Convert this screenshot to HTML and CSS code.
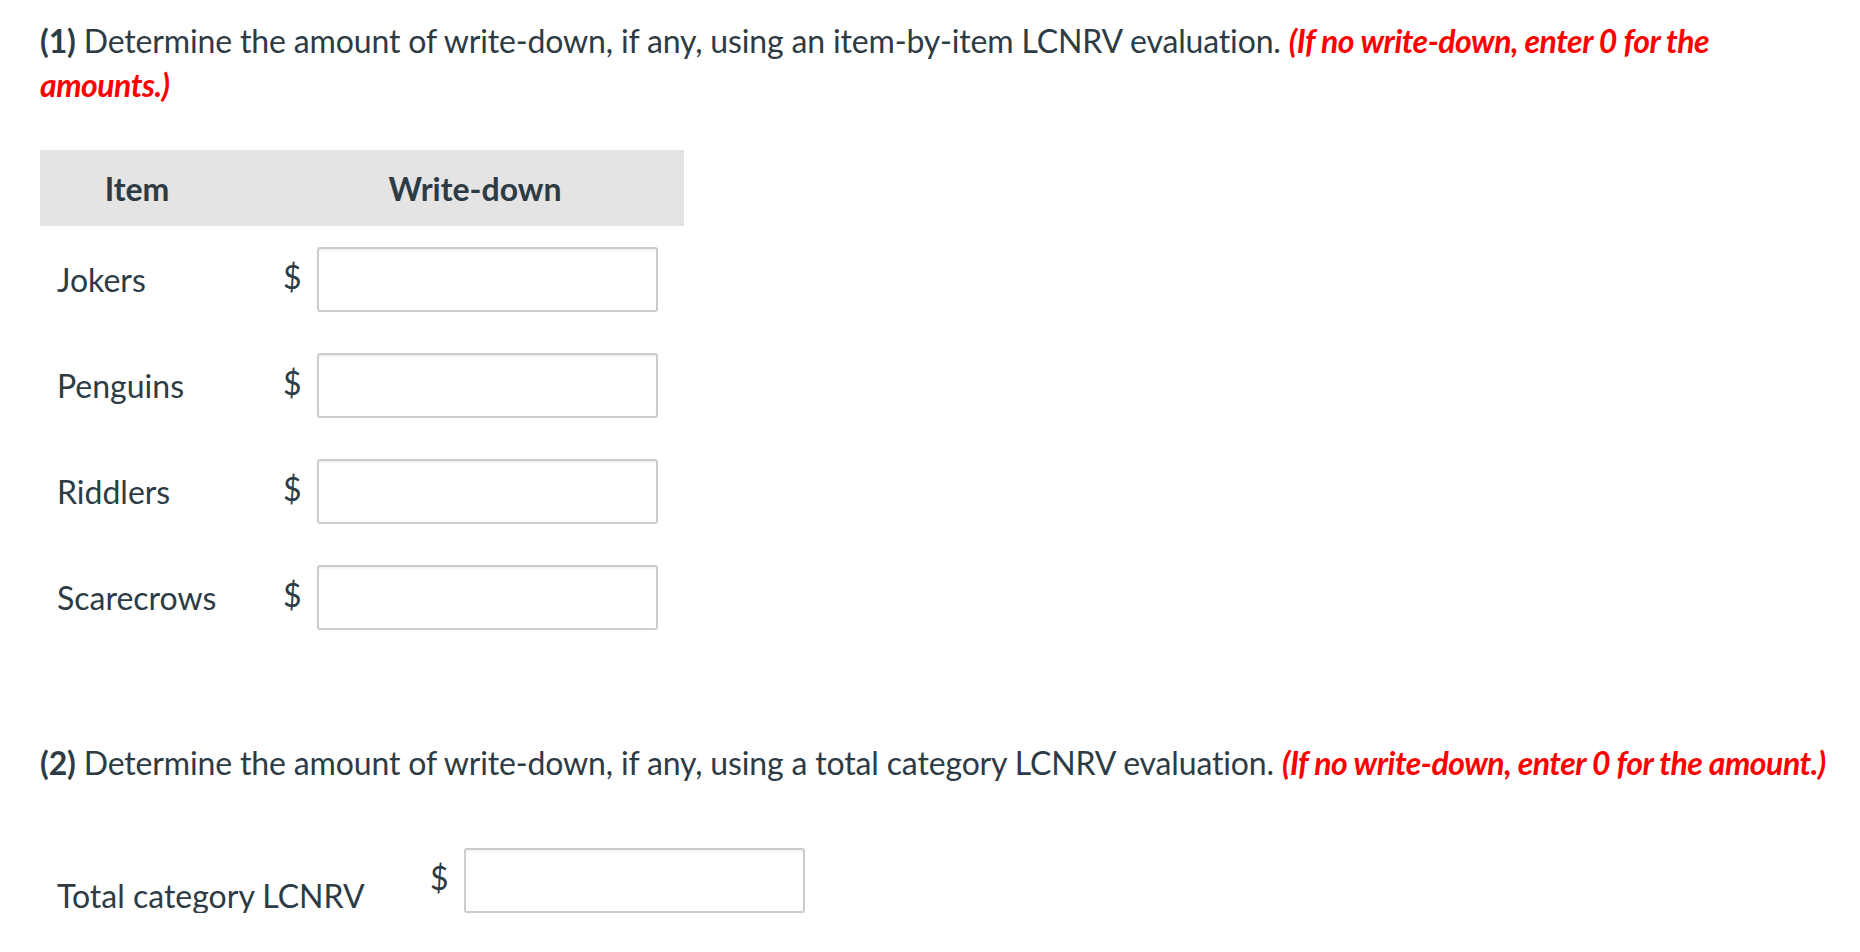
FILE: index.html
```html
<!DOCTYPE html>
<html>
<head>
<meta charset="utf-8">
<link rel="stylesheet" href="styles.css">
</head>
<body>
<div class="page">
  <p class="question"><strong>(1)</strong> Determine the amount of write-down, if any, using an item-by-item LCNRV evaluation. <em class="hint">(If no write-down, enter 0 for the amounts.)</em></p>

  <div class="table">
    <div class="thead">
      <div class="th th-item">Item</div>
      <div class="th th-wd">Write-down</div>
    </div>
    <div class="row">
      <div class="label">Jokers</div>
      <div class="cur">$</div>
      <div class="input"></div>
    </div>
    <div class="row">
      <div class="label">Penguins</div>
      <div class="cur">$</div>
      <div class="input"></div>
    </div>
    <div class="row">
      <div class="label">Riddlers</div>
      <div class="cur">$</div>
      <div class="input"></div>
    </div>
    <div class="row">
      <div class="label">Scarecrows</div>
      <div class="cur">$</div>
      <div class="input"></div>
    </div>
  </div>

  <p class="question q2"><strong>(2)</strong> Determine the amount of write-down, if any, using a total category LCNRV evaluation. <em class="hint">(If no write-down, enter 0 for the amount.)</em></p>

  <div class="total">
    <div class="total-label">Total category LCNRV</div>
    <div class="cur">$</div>
    <div class="input"></div>
  </div>
</div>
</body>
</html>
```

FILE: styles.css
```css
html, body {
  margin: 0;
  padding: 0;
  background: #ffffff;
}

body {
  font-family: Lato, "Open Sans", sans-serif;
  color: #2d3b45;
  font-size: 32px;
}

.page {
  padding: 19px 20px 0 40px;
}

.question {
  margin: 0;
  line-height: 44px;
  letter-spacing: -0.15px;
}

.question strong {
  font-weight: 700;
}

.hint {
  color: #ff0000;
  font-weight: 700;
  font-style: italic;
  letter-spacing: -0.5px;
}

.table {
  width: 644px;
  margin-top: 43px;
}

.thead {
  display: flex;
  align-items: center;
  height: 76px;
  background: #e4e4e4;
  font-weight: 700;
}

.th-item {
  width: 194px;
  text-align: center;
}

.th-wd {
  flex: 1;
  padding-left: 32px;
  text-align: center;
}

.row {
  display: flex;
  align-items: center;
  height: 106px;
  padding-left: 17px;
}

.label {
  width: 226px;
}

.cur {
  width: 34px;
  margin-top: -6px;
}

.input {
  box-sizing: border-box;
  width: 341px;
  height: 65px;
  border: 2px solid #cccccc;
  border-radius: 3px;
  background: #ffffff;
  box-shadow: inset 0 2px 2px rgba(0, 0, 0, 0.05);
}

.q2 {
  margin-top: 91px;
}

.total {
  display: flex;
  align-items: center;
  margin-top: 63px;
  padding-left: 17px;
}

.total-label {
  width: 373px;
  align-self: flex-end;
  line-height: 42px;
  margin-bottom: -4px;
}
```
